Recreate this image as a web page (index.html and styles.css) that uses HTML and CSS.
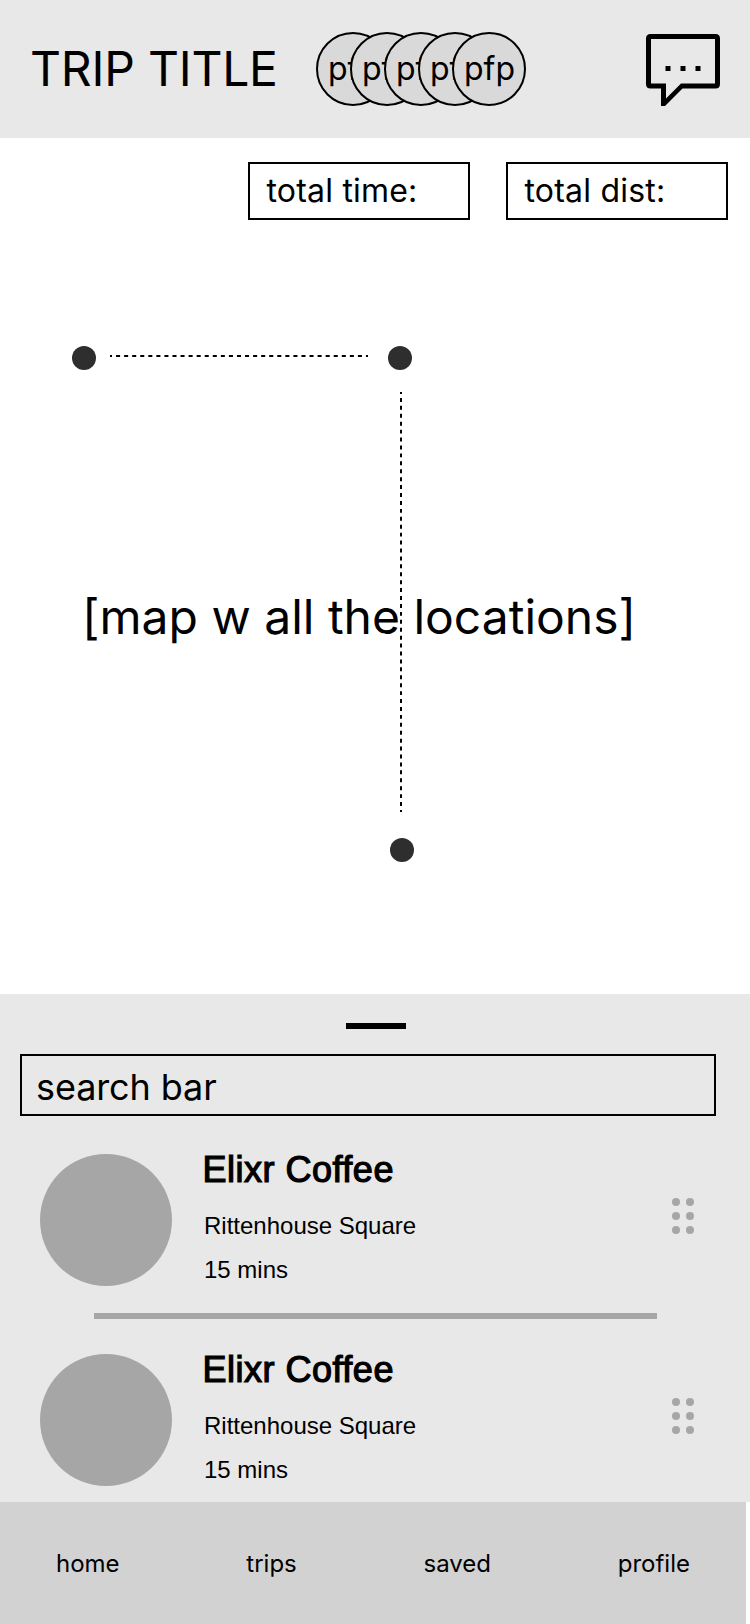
FILE: index.html
```html
<!DOCTYPE html>
<html lang="en">
<head>
<meta charset="utf-8">
<title>Trip</title>
<link rel="stylesheet" href="styles.css">
</head>
<body>
<div class="screen">
  <header class="header">
    <h1 class="title">TRIP TITLE</h1>
    <div class="members">
      <span class="pfp">pfp</span><span class="pfp">pfp</span><span class="pfp">pfp</span><span class="pfp">pfp</span><span class="pfp">pfp</span>
    </div>
    <svg class="chat" width="74" height="72" viewBox="0 0 74 72">
      <path fill-rule="evenodd" d="M4.500 0H69.500Q74 0 74 4.500V50Q74 54.500 69.500 54.500H36.500L19 72H15V54.500H4.500Q0 54.500 0 50V4.500Q0 0 4.500 0ZM5 5V49.500H20V64.500L35 49.500H69V5Z"/>
      <path d="M19.500 32h5v5h-5zM34.500 32h5v5h-5zM49.500 32h5v5h-5z"/>
    </svg>
  </header>
  <main class="map">
    <div class="totals">
      <div class="total">total time:</div>
      <div class="total">total dist:</div>
    </div>
    <p class="map-label">[map w all the locations]</p>
    <svg class="route" width="750" height="856" viewBox="0 138 750 856">
      <path d="M110 356H368" stroke="#000" stroke-width="2" stroke-dasharray="4.031" stroke-dashoffset="2.016"/>
      <path d="M401 392V812" stroke="#000" stroke-width="2" stroke-dasharray="3.962" stroke-dashoffset="1.981"/>
      <g fill="#2e2e2e"><circle cx="84" cy="358" r="12"/><circle cx="400" cy="358" r="12"/><circle cx="402" cy="850" r="12"/></g>
    </svg>
  </main>
  <section class="sheet">
    <div class="handle"></div>
    <div class="search">search bar</div>
    <article class="stop">
      <div class="thumb"></div>
      <div class="info">
        <h2 class="name">Elixr Coffee</h2>
        <p class="detail">Rittenhouse Square</p>
        <p class="detail">15 mins</p>
      </div>
      <div class="grip"><i></i><i></i><i></i><i></i><i></i><i></i></div>
    </article>
    <div class="divider"></div>
    <article class="stop">
      <div class="thumb"></div>
      <div class="info">
        <h2 class="name">Elixr Coffee</h2>
        <p class="detail">Rittenhouse Square</p>
        <p class="detail">15 mins</p>
      </div>
      <div class="grip"><i></i><i></i><i></i><i></i><i></i><i></i></div>
    </article>
  </section>
  <nav class="nav"><a>home</a><a>trips</a><a>saved</a><a>profile</a></nav>
</div>
</body>
</html>
```
FILE: styles.css
```css
* { box-sizing: border-box; margin: 0; padding: 0; }
body { background: #fff; color: #000; font-family: Inter, sans-serif; }
.screen { width: 750px; height: 1624px; display: flex; flex-direction: column; overflow: hidden; }

.header { height: 138px; flex: none; display: flex; align-items: center; padding: 0 30px; background: #e8e8e8; }
.title { width: 286px; font-size: 48px; font-weight: 400; line-height: 58px; letter-spacing: -0.2px; white-space: nowrap; }
.members { display: flex; }
.pfp { width: 74px; height: 74px; border: 2px solid #000; border-radius: 50%; background: #d9d9d9; font-size: 32px; line-height: 70px; padding-left: 10px; overflow: hidden; }
.pfp + .pfp { margin-left: -40px; }
.chat { margin: 2px 0 0 auto; display: block; }

.map { position: relative; height: 856px; flex: none; padding: 24px 22px 0 0; }
.totals { display: flex; justify-content: flex-end; gap: 36px; }
.total { width: 222px; height: 58px; border: 2px solid #000; padding-left: 16.5px; font-size: 32px; line-height: 54px; letter-spacing: 0.2px; }
.map-label { margin: 368px 0 0 82px; font-size: 48px; line-height: 58px; white-space: nowrap; }
.route { position: absolute; left: 0; top: 0; }

.sheet { height: 508px; flex: none; padding-top: 29px; background: #e8e8e8; }
.handle { width: 60px; height: 6px; margin-left: 346px; background: #000; }
.search { width: 696px; height: 62px; margin: 25px 0 38px 20px; border: 2px solid #000; padding-left: 14px; font-size: 36px; line-height: 62px; letter-spacing: -0.1px; }
.stop { display: flex; height: 132px; padding: 0 56px 0 40px; }
.thumb { width: 132px; height: 132px; border-radius: 50%; background: #a6a6a6; }
.info { flex: 1; padding-left: 30px; font-family: "Liberation Sans", sans-serif; }
.name { margin-left: 0.5px; font-size: 36px; font-weight: 400; line-height: 32px; letter-spacing: 0.5px; -webkit-text-stroke: 1.2px #000; }
.detail { margin-left: 2px; margin-top: 18px; font-size: 24px; line-height: 26px; }
.name + .detail { margin-top: 27px; }
.grip { display: grid; grid-template-columns: 8px 8px; grid-auto-rows: 8px; gap: 6px; align-self: flex-start; margin-top: 44px; }
.grip i { border-radius: 50%; background: #a6a6a6; }
.divider { width: 563px; height: 6px; margin: 27px 0 35px 93.5px; background: #a6a6a6; }

.nav { width: 746px; height: 122px; display: flex; justify-content: space-between; align-items: center; padding: 2px 56px 0 56px; background: #d2d2d2; font-size: 24px; line-height: 30px; }
```
